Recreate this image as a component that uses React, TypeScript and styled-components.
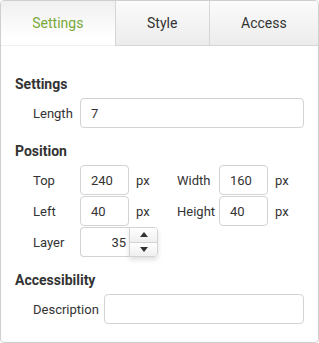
import React, { useState } from 'react'
import styled, { createGlobalStyle } from 'styled-components'

const GlobalStyle = createGlobalStyle`
  html, body {
    margin: 0;
    padding: 0;
    background: #fff;
  }
  body {
    font-family: Roboto, 'Liberation Sans', Arial, sans-serif;
    color: #333;
  }
  * {
    box-sizing: border-box;
  }
`

const tabs = ['Settings', 'Style', 'Access']

const App = () => {
  const [active, setActive] = useState(0)
  const [layer, setLayer] = useState(35)

  return (
    <>
      <GlobalStyle />
      <Card>
        <TabBar>
          {tabs.map((t, i) => (
            <Tab key={t} active={i === active} onClick={() => setActive(i)}>
              {t}
            </Tab>
          ))}
        </TabBar>

        <Content>
          <Heading>Settings</Heading>
          <Row>
            <Label>Length</Label>
            <Input defaultValue="7" />
          </Row>

          <Heading spaced>Position</Heading>
          <Row>
            <Field width={144}>
              <Label>Top</Label>
              <Input small defaultValue="240" />
              <Unit>px</Unit>
            </Field>
            <Field>
              <Label narrow>Width</Label>
              <Input small defaultValue="160" />
              <Unit>px</Unit>
            </Field>
          </Row>
          <Row>
            <Field width={144}>
              <Label>Left</Label>
              <Input small defaultValue="40" />
              <Unit>px</Unit>
            </Field>
            <Field>
              <Label narrow>Height</Label>
              <Input small defaultValue="40" />
              <Unit>px</Unit>
            </Field>
          </Row>
          <Row>
            <Label>Layer</Label>
            <Spinner>
              <SpinInput value={layer} readOnly />
              <SpinButtons>
                <SpinButton onClick={() => setLayer(layer + 1)}>
                  <svg width="8" height="5" viewBox="0 0 8 5">
                    <path d="M0 5 L4 0 L8 5 Z" fill="#333" />
                  </svg>
                </SpinButton>
                <SpinButton down onClick={() => setLayer(layer - 1)}>
                  <svg width="8" height="5" viewBox="0 0 8 5">
                    <path d="M0 0 L8 0 L4 5 Z" fill="#333" />
                  </svg>
                </SpinButton>
              </SpinButtons>
            </Spinner>
          </Row>

          <Heading spaced>Accessibility</Heading>
          <Row>
            <Label>Description</Label>
            <Input />
          </Row>
        </Content>
      </Card>
    </>
  )
}

const Card = styled.div`
  width: 319px;
  height: 343px;
  border: 1px solid #cfcfcf;
  border-radius: 4px;
  overflow: hidden;
  background: #fff;
  display: flex;
  flex-direction: column;
`
const TabBar = styled.div`
  display: flex;
  height: 45px;
  flex-shrink: 0;
`
const Tab = styled.div<{ active?: boolean }>`
  flex: 1 1 auto;
  padding: 0 31px;
  display: flex;
  align-items: center;
  justify-content: center;
  font-size: 14px;
  cursor: pointer;
  color: ${(p) => (p.active ? '#79a83b' : '#333')};
  background: ${(p) =>
    p.active
      ? 'linear-gradient(to bottom, #f0f0f0, #ffffff 85%)'
      : 'linear-gradient(to bottom, #fbfbfb, #ececec)'};
  border-bottom: 1px solid ${(p) => (p.active ? 'transparent' : '#d6d6d6')};
  & + & {
    border-left: 1px solid #d6d6d6;
  }
`
const Content = styled.div`
  padding: 28px 14px 0 14px;
  display: flex;
  flex-direction: column;
`
const Heading = styled.div<{ spaced?: boolean }>`
  font-size: 14px;
  font-weight: bold;
  line-height: 20px;
  color: #333;
  margin-top: ${(p) => (p.spaced ? '12px' : '0')};
  margin-bottom: 4px;
`
const Row = styled.div`
  display: flex;
  align-items: center;
  padding-left: 18px;
  margin-bottom: 1px;
`
const Field = styled.div<{ width?: number }>`
  display: flex;
  align-items: center;
  width: ${(p) => (p.width ? `${p.width}px` : 'auto')};
  flex-shrink: 0;
`
const Label = styled.span<{ narrow?: boolean }>`
  font-size: 13px;
  color: #333;
  min-width: ${(p) => (p.narrow ? '38px' : '42px')};
  margin-right: ${(p) => (p.narrow ? '4px' : '5px')};
  white-space: nowrap;
`
const Input = styled.input<{ small?: boolean }>`
  height: 30px;
  width: ${(p) => (p.small ? '49px' : 'auto')};
  flex: ${(p) => (p.small ? '0 0 auto' : '1 1 auto')};
  min-width: 0;
  border: 1px solid #d3d3d3;
  border-radius: 4px;
  padding: 0 10px;
  font-family: Roboto, 'Liberation Sans', Arial, sans-serif;
  font-size: 13px;
  color: #333;
  outline: none;
  background: #fff;
`
const Unit = styled.span`
  font-size: 13px;
  color: #333;
  margin-left: 7px;
`
const Spinner = styled.div`
  display: flex;
  height: 30px;
`
const SpinInput = styled.input`
  width: 49px;
  height: 30px;
  border: 1px solid #d3d3d3;
  border-right: none;
  border-radius: 4px 0 0 4px;
  padding: 0 3px 0 6px;
  text-align: right;
  font-family: Roboto, 'Liberation Sans', Arial, sans-serif;
  font-size: 13px;
  color: #333;
  outline: none;
`
const SpinButtons = styled.div`
  width: 29px;
  display: flex;
  flex-direction: column;
  border: 1px solid #d3d3d3;
  border-radius: 0 4px 4px 0;
  overflow: hidden;
  box-shadow: 0 3px 5px rgba(0, 0, 0, 0.12);
`
const SpinButton = styled.div<{ down?: boolean }>`
  flex: 1;
  display: flex;
  align-items: center;
  justify-content: center;
  cursor: pointer;
  background: linear-gradient(to bottom, #ffffff, #efefef);
  border-top: ${(p) => (p.down ? '1px solid #d3d3d3' : 'none')};
`

export default App
